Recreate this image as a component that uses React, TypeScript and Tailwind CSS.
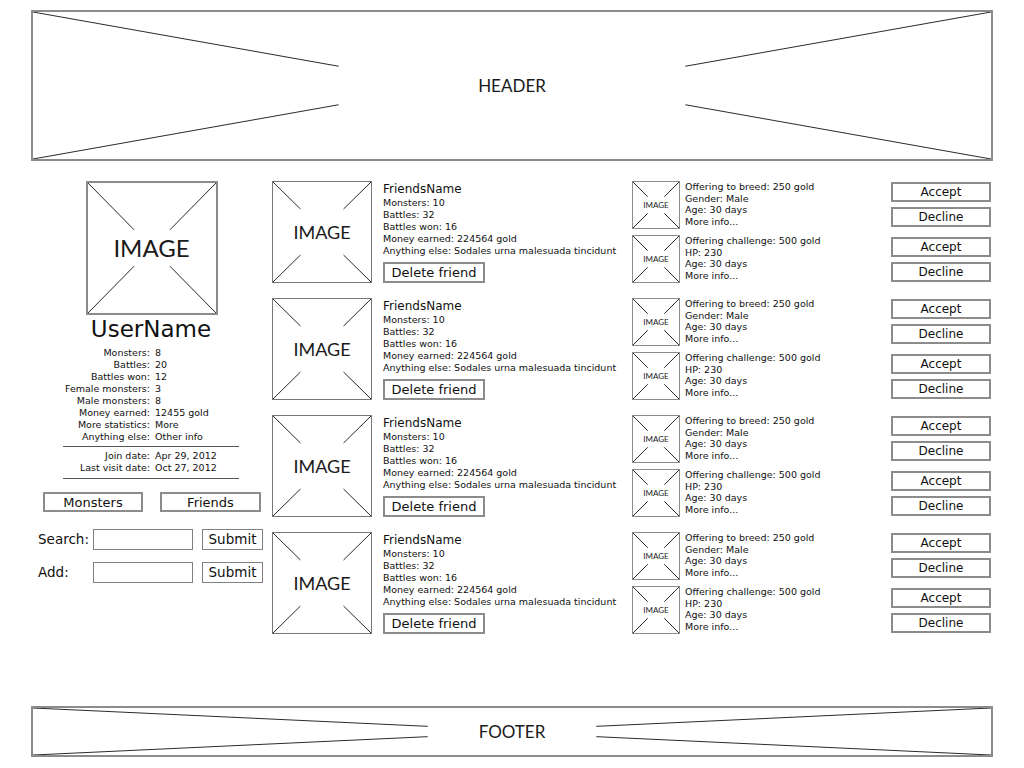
import React from 'react';

type CrossProps = {
    label: string;
    lx: number;
    ly: number;
    rx: number;
    className: string;
    textClass: string;
};

// wireframe placeholder: box with lines from the corners toward the middle
const Cross = ({ label, lx, ly, rx, className, textClass }: CrossProps) => (
    <div className={`grid grid-cols-1 grid-rows-1 shrink-0 ${className}`}>
        <svg className="[grid-area:1/1] w-full h-full" viewBox="0 0 100 100" preserveAspectRatio="none">
            <g stroke="#2a2a2a" strokeWidth="1" vectorEffect="non-scaling-stroke">
                <line x1="0" y1="0" x2={lx} y2={ly} vectorEffect="non-scaling-stroke" />
                <line x1="0" y1="100" x2={lx} y2={100 - ly} vectorEffect="non-scaling-stroke" />
                <line x1="100" y1="0" x2={rx} y2={ly} vectorEffect="non-scaling-stroke" />
                <line x1="100" y1="100" x2={rx} y2={100 - ly} vectorEffect="non-scaling-stroke" />
            </g>
        </svg>
        <div className={`[grid-area:1/1] flex items-center justify-center font-['Lato',sans-serif] text-[#1a1a1a] ${textClass}`}>
            {label}
        </div>
    </div>
);

const stats: [string, string][] = [
    ['Monsters:', '8'],
    ['Battles:', '20'],
    ['Battles won:', '12'],
    ['Female monsters:', '3'],
    ['Male monsters:', '8'],
    ['Money earned:', '12455 gold'],
    ['More statistics:', 'More'],
    ['Anything else:', 'Other info'],
];

const dates: [string, string][] = [
    ['Join date:', 'Apr 29, 2012'],
    ['Last visit date:', 'Oct 27, 2012'],
];

const StatGrid = ({ rows }: { rows: [string, string][] }) => (
    <div className="grid grid-cols-[87px_1fr] gap-x-[5px] text-[9.5px] leading-[12px]">
        {rows.map(([k, v]) => (
            <React.Fragment key={k}>
                <span className="text-right whitespace-nowrap">{k}</span>
                <span className="whitespace-nowrap">{v}</span>
            </React.Fragment>
        ))}
    </div>
);

const Sidebar = () => (
    <div className="w-[226px] ml-[7px] shrink-0 flex flex-col">
        <div className="flex justify-center pl-[1px]">
            <Cross label="IMAGE" lx={36} ly={36} rx={64} className="w-[132px] h-[134px] border-2 border-[#8c8c8c]" textClass="text-[24px]" />
        </div>
        <p className="text-center text-[23px] leading-[28px]">UserName</p>
        <div className="w-[176px] ml-[25px] mt-[4px]">
            <div className="pb-[3px] border-b border-[#555]">
                <StatGrid rows={stats} />
            </div>
            <div className="pt-[3px] pb-[4px] border-b border-[#555]">
                <StatGrid rows={dates} />
            </div>
        </div>
        <div className="flex mt-[13px] ml-[5px] gap-[17px] text-[13px]">
            <button className="w-[100px] h-[20px] border-2 border-[#8c8c8c] leading-none">Monsters</button>
            <button className="w-[101px] h-[20px] border-2 border-[#8c8c8c] leading-none">Friends</button>
        </div>
        <div className="flex items-center mt-[17px] text-[13.5px]">
            <span className="w-[55px]">Search:</span>
            <div className="w-[100px] h-[21px] border border-[#808080]" />
            <button className="ml-[9px] w-[61px] h-[21px] border border-[#808080] leading-none">Submit</button>
        </div>
        <div className="flex items-center mt-[12px] text-[13.5px]">
            <span className="w-[55px]">Add:</span>
            <div className="w-[100px] h-[21px] border border-[#808080]" />
            <button className="ml-[9px] w-[61px] h-[21px] border border-[#808080] leading-none">Submit</button>
        </div>
    </div>
);

const Offer = ({ lines }: { lines: string[] }) => (
    <div className="flex">
        <Cross label="IMAGE" lx={32} ly={32} rx={68} className="w-[48px] h-[48px] border border-[#8c8c8c]" textClass="text-[8px]" />
        <div className="ml-[5px] text-[9.5px] leading-[11.7px] whitespace-nowrap">
            {lines.map((l) => (
                <p key={l}>{l}</p>
            ))}
        </div>
    </div>
);

const SmallButton = ({ label }: { label: string }) => (
    <button className="w-[100px] h-[20px] border-2 border-[#8c8c8c] text-[12px] leading-none">{label}</button>
);

const FriendRow = () => (
    <div className="flex h-[102px]">
        <Cross label="IMAGE" lx={28} ly={27} rx={72} className="w-[100px] h-[102px] border border-[#777]" textClass="text-[18px]" />
        <div className="ml-[11px] w-[249px] shrink-0 flex flex-col items-start">
            <p className="text-[12px] leading-[16px]">FriendsName</p>
            <div className="text-[9.5px] leading-[12px] whitespace-nowrap">
                <p>Monsters: 10</p>
                <p>Battles: 32</p>
                <p>Battles won: 16</p>
                <p>Money earned: 224564 gold</p>
                <p>Anything else: Sodales urna malesuada tincidunt</p>
            </div>
            <button className="mt-[5px] w-[102px] h-[21px] border-2 border-[#8c8c8c] text-[13px] leading-none">Delete friend</button>
        </div>
        <div className="flex-1 flex flex-col gap-[6px]">
            <Offer lines={['Offering to breed: 250 gold', 'Gender: Male', 'Age: 30 days', 'More info...']} />
            <Offer lines={['Offering challenge: 500 gold', 'HP: 230', 'Age: 30 days', 'More info...']} />
        </div>
        <div className="w-[100px] mr-[2px] pt-[1px] flex flex-col">
            <div className="flex flex-col gap-[5px]">
                <SmallButton label="Accept" />
                <SmallButton label="Decline" />
            </div>
            <div className="flex flex-col gap-[5px] mt-[10px]">
                <SmallButton label="Accept" />
                <SmallButton label="Decline" />
            </div>
        </div>
    </div>
);

export default function App() {
    return (
        <div className="w-[1024px] h-[768px] bg-white text-[#111] px-[31px] pt-[10px] font-['DejaVu_Sans',sans-serif] overflow-hidden">
            <Cross label="HEADER" lx={31.9} ly={36.9} rx={68.1} className="h-[151px] border-2 border-[#8c8c8c]" textClass="text-[17px]" />
            <main className="flex h-[545px] pt-[20px]">
                <Sidebar />
                <div className="ml-[8px] flex-1 flex flex-col gap-[15px]">
                    <FriendRow />
                    <FriendRow />
                    <FriendRow />
                    <FriendRow />
                </div>
            </main>
            <Cross label="FOOTER" lx={41.2} ly={39} rx={58.8} className="h-[51px] border-2 border-[#8c8c8c]" textClass="text-[17px]" />
        </div>
    );
}
